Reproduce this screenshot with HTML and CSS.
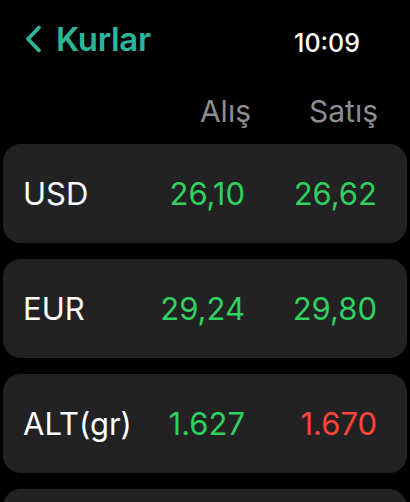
FILE: index.html
```html
<!DOCTYPE html>
<html lang="tr">
<head>
    <meta charset="UTF-8">
    <meta name="viewport" content="width=device-width, initial-scale=1.0">
    <title>Kurlar</title>
    <link rel="stylesheet" href="styles.css">
</head>
<body>
    <div class="watch">
        <div class="topbar">
            <a href="#" class="back">
                <svg class="chevron" width="18" height="30" viewBox="0 0 18 30">
                    <path d="M15 3.5 L4 15 L15 26.5" fill="none" stroke="#2bb69b" stroke-width="3.8" stroke-linecap="round" stroke-linejoin="round"/>
                </svg>
                <span>Kurlar</span>
            </a>
            <div class="clock">10:09</div>
        </div>

        <div class="row head">
            <span></span>
            <span class="num">Alış</span>
            <span class="num">Satış</span>
        </div>

        <div class="card row">
            <span class="name">USD</span>
            <span class="num up">26,10</span>
            <span class="num up">26,62</span>
        </div>
        <div class="card row">
            <span class="name">EUR</span>
            <span class="num up">29,24</span>
            <span class="num up">29,80</span>
        </div>
        <div class="card row">
            <span class="name">ALT(gr)</span>
            <span class="num up">1.627</span>
            <span class="num down">1.670</span>
        </div>
        <!-- next row is scrolled below the screen edge -->
        <div class="card row"></div>
    </div>
</body>
</html>
```

FILE: styles.css
```css
body {
    margin: 0;
    background: #000;
    font-family: Inter, 'Noto Sans', sans-serif;
    color: #fff;
    overflow: hidden;
}
.watch {
    width: 410px;
    height: 502px;
    padding: 0 3px;
    box-sizing: border-box;
    overflow: hidden;
}
.topbar {
    display: flex;
    justify-content: space-between;
    align-items: center;
    height: 78px;
    padding: 0 47px 0 21px;
}
.back {
    display: flex;
    align-items: center;
    gap: 14px;
    color: #2bb69b;
    text-decoration: none;
    font-size: 33px;
    font-weight: 600;
    letter-spacing: -0.3px;
}
.clock {
    font-size: 25px;
    font-weight: 500;
    padding-top: 8px;
}
.row {
    display: grid;
    grid-template-columns: 1fr 110px 132px;
    align-items: center;
    padding: 0 30px 0 20px;
}
.head {
    height: 66px;
    color: #8d8d93;
    font-size: 30px;
    padding-right: 29px;
}
.head .num:nth-child(2) {
    margin-right: -5px;
}
.card {
    height: 99px;
    margin-bottom: 16px;
    background: #222224;
    border-radius: 18px;
    font-size: 31px;
}
.num {
    text-align: right;
}
.up {
    color: #2fd15f;
}
.down {
    color: #ff453a;
}
```
